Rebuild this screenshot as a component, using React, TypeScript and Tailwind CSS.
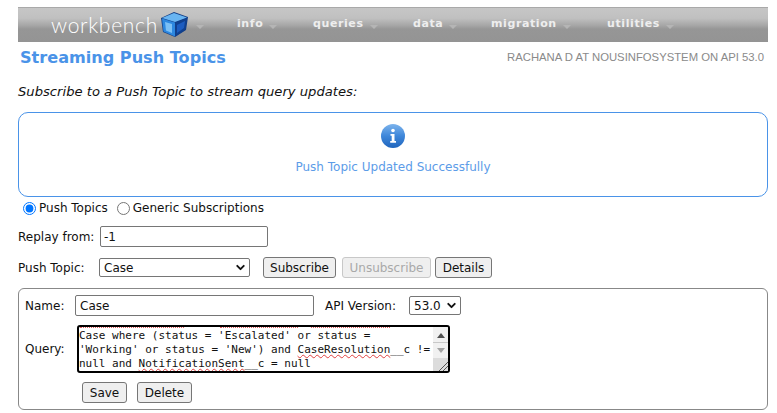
import { ChevronDown } from 'lucide-react';

const menuItems = [
  { label: 'info', width: 'w-[76px]' },
  { label: 'queries', width: 'w-[100px]' },
  { label: 'data', width: 'w-[78px]' },
  { label: 'migration', width: 'w-[116px]' },
  { label: 'utilities', width: 'w-[90px]' },
];

const verdana = 'font-["DejaVu_Sans",sans-serif]';

function Caret() {
  return (
    <svg className="ml-[6px] mt-[4px] h-[4px] w-[8px]" viewBox="0 0 8 4">
      <path d="M0 0h8L4 4z" fill="#b5b5b5" />
    </svg>
  );
}

function CubeLogo() {
  return (
    <svg className="h-[27px] w-[29px]" viewBox="0 0 29 27">
      <path d="M14 1 28 6 26 19 15 26 3 21 1 7z" fill="#123e86" />
      <path d="M14 2 27 6.500 15 11 2 7z" fill="#69b5f2" />
      <path d="M2 7.500 15 11.500 15 25.500 3.500 20.500z" fill="#2d88e0" />
      <path d="M5 11 12 13 12 22 6 19.500z" fill="#7cc0f5" />
      <path d="M15.500 11.500 27 7 25.500 18.500 15.500 25.500z" fill="#10408f" />
      <path d="M17 14 25 10 24 17 17 22z" fill="#1c5cc0" />
    </svg>
  );
}

function InfoIcon() {
  return (
    <svg className="h-[24px] w-[24px]" viewBox="0 0 24 24">
      <defs>
        <linearGradient id="infoFill" x1="0" y1="0" x2="0" y2="1">
          <stop offset="0" stopColor="#7db4ec" />
          <stop offset="0.5" stopColor="#3f87da" />
          <stop offset="1" stopColor="#1f65bd" />
        </linearGradient>
      </defs>
      <circle cx="12" cy="12" r="12" fill="url(#infoFill)" />
      <circle cx="12" cy="6.500" r="1.800" fill="#fff" />
      <path d="M9.500 10h4v7h1.500v1.800H9.200V17h1.500v-5.200H9.500z" fill="#fff" />
    </svg>
  );
}

function Button({ label, width, disabled }: { label: string; width: string; disabled?: boolean }) {
  return (
    <button
      disabled={disabled}
      className={`h-[21px] rounded-[3px] border text-[12px] ${verdana} ${width} ${
        disabled
          ? 'border-[#c8c8c8] bg-[#efefef] text-[#a9a9a9]'
          : 'border-[#767676] bg-[#efefef] text-[#111]'
      }`}
    >
      {label}
    </button>
  );
}

function Squiggle({ children }: { children: string }) {
  return (
    <span className="underline decoration-[#e04040] decoration-wavy decoration-1 underline-offset-1">
      {children}
    </span>
  );
}

export default function App() {
  return (
    <div className={`h-[413px] w-[777px] overflow-hidden bg-white pl-[18px] pr-[9px] pt-[7px] text-[12px] text-[#111] ${verdana}`}>
      {/* Menu bar */}
      <div className="flex h-[35px] items-start border-t border-t-[#a9a9a9] bg-[linear-gradient(#c6c6c6_0%,#c0c0c0_30%,#a8a8a8_50%,#969696_62%,#949494_100%)]">
        <div className='ml-[33px] flex w-[186px] items-center pt-[3px]'>
          <span className='w-[109px] font-["Lato",sans-serif] text-[21px] font-light leading-[27px] tracking-[0.7px] text-white'>
            workbench
          </span>
          <CubeLogo />
          <span className="ml-[1px]"><Caret /></span>
        </div>
        {menuItems.map((item) => (
          <div key={item.label} className={`mt-[2px] flex h-[29px] items-center font-bold ${item.width}`}>
            <span className="text-[11px] tracking-[0.6px] text-[#eeeeee]">{item.label}</span>
            <Caret />
          </div>
        ))}
      </div>

      {/* Title row */}
      <div className="flex h-[32px] items-center justify-between pl-[2px] pr-[4px]">
        <h1 className="text-[16.1px] font-bold text-[#4a93e8]">Streaming Push Topics</h1>
        <span className='mb-[1px] font-["Liberation_Sans",sans-serif] text-[11.3px] text-[#8a8a8a]'>
          RACHANA D AT NOUSINFOSYSTEM ON API 53.0
        </span>
      </div>

      <p className="mt-[7px] h-[22px] text-[13.15px] italic leading-[22px]">Subscribe to a Push Topic to stream query updates:</p>

      {/* Status message */}
      <div className="mt-[9px] flex h-[85px] flex-col items-center rounded-[10px] border border-[#4a93e8] pt-[11px]">
        <InfoIcon />
        <p className="mt-[10px] text-[12px] text-[#5c9ce8]">Push Topic Updated Successfully</p>
      </div>

      {/* Subscription type */}
      <div className="flex h-[22px] items-center pl-[5px]">
        <input type="radio" name="kind" defaultChecked className="m-0 h-[13px] w-[13px] accent-[#0075ff]" />
        <span className="ml-[3px]">Push Topics</span>
        <input type="radio" name="kind" className="ml-[9px] h-[13px] w-[13px]" />
        <span className="ml-[3px]">Generic Subscriptions</span>
      </div>

      <div className="mt-[7px] flex h-[21px] items-center">
        <span className="w-[82px]">Replay from:</span>
        <input
          defaultValue="-1"
          className="h-[21px] w-[168px] rounded-[2px] border border-[#767676] px-[3px] text-[12px] outline-none"
        />
      </div>

      <div className="mt-[10px] flex h-[21px] items-center">
        <span className="w-[81px]">Push Topic:</span>
        <div className="flex h-[19px] w-[151px] items-center justify-between rounded-[2px] border border-[#767676] pl-[4px] pr-[2px]">
          <span>Case</span>
          <ChevronDown size={13} strokeWidth={3.5} />
        </div>
        <div className="ml-[13px] flex gap-[6px]">
          <Button label="Subscribe" width="w-[73px]" />
          <Button label="Unsubscribe" width="w-[89px]" disabled />
        </div>
        <span className="ml-[4px]"><Button label="Details" width="w-[57px]" /></span>
      </div>

      {/* Topic editor */}
      <div className="mt-[10px] h-[122px] rounded-[6px] border border-[#888888] pl-[6px] pt-[6px]">
        <div className="flex h-[21px] items-center">
          <span className="w-[50px]">Name:</span>
          <input
            defaultValue="Case"
            className="h-[21px] w-[239px] rounded-[2px] border border-[#767676] px-[4px] text-[12px] outline-none"
          />
          <span className="ml-[11px] w-[84px]">API Version:</span>
          <div className="flex h-[19px] w-[52px] items-center justify-between rounded-[2px] border border-[#767676] pl-[4px] pr-[2px]">
            <span>53.0</span>
            <ChevronDown size={13} strokeWidth={3.5} />
          </div>
        </div>

        <div className="mt-[9px] flex h-[48px] items-center">
          <span className="w-[52px]">Query:</span>
          <div className="flex h-[48px] w-[373px] overflow-hidden rounded-[3px] border-2 border-black">
            <div className='flex-1 overflow-hidden font-["DejaVu_Sans_Mono",monospace] text-[11px] leading-[14px] text-[#111]'>
              {/* tail of the spell-check marks from the line scrolled out of view */}
              <div className="flex h-[2px]">
                <div className="ml-[1px] w-[104px] border-t border-dotted border-[#e06060]" />
                <div className="ml-[36px] w-[78px] border-t border-dotted border-[#e06060]" />
                <div className="ml-[13px] w-[79px] border-t border-dotted border-[#e06060]" />
              </div>
              <div className="whitespace-pre">Case where (status = 'Escalated' or status =</div>
              <div className="whitespace-pre">'Working' or status = 'New') and <Squiggle>CaseResolution</Squiggle>__c !=</div>
              <div className="whitespace-pre">null and <Squiggle>NotificationSent</Squiggle>__c = null</div>
            </div>
            {/* Scrollbar */}
            <div className="flex w-[15px] flex-col items-center bg-[#f1f1f1]">
              <svg className="mt-[6px] h-[5px] w-[8px]" viewBox="0 0 8 5"><path d="M4 0 8 5H0z" fill="#505050" /></svg>
              <div className="mt-[4px] h-px w-full bg-[#c8c8c8]" />
              <svg className="mt-[5px] h-[5px] w-[8px]" viewBox="0 0 8 5"><path d="M0 0h8L4 5z" fill="#a3a3a3" /></svg>
              <div className="mt-[5px] flex w-full flex-1 items-end justify-end bg-[#dcdcdc]">
                <svg className="h-[9px] w-[9px]" viewBox="0 0 9 9"><path d="M0 9 9 0M4 9 9 4" stroke="#555" strokeWidth="1" /></svg>
              </div>
            </div>
          </div>
        </div>

        <div className="ml-[57px] mt-[9px] flex gap-[10px]">
          <Button label="Save" width="w-[45px]" />
          <Button label="Delete" width="w-[55px]" />
        </div>
      </div>
    </div>
  );
}
